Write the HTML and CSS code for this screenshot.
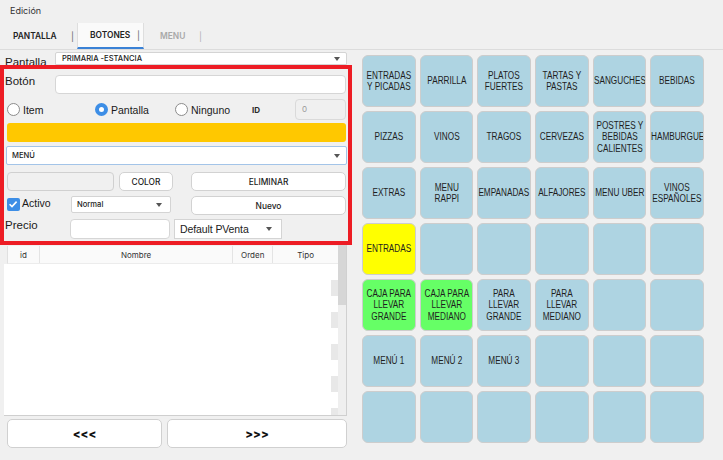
FILE: index.html
```html
<!DOCTYPE html>
<html lang="es">
<head>
<meta charset="utf-8">
<title>Edición</title>
<link rel="stylesheet" href="styles.css">
</head>
<body>
<div class="app">
  <div class="title">Edición</div>
  <div class="tabs">
    <div class="tab t1"><span>PANTALLA</span><span class="pipe">|</span></div>
    <div class="tab t2 active"><span>BOTONES</span><span class="pipe">|</span></div>
    <div class="tab t3 dim"><span>MENU</span><span class="pipe">|</span></div>
  </div>
  <div class="main">
    <div class="left">
      <div class="pant-row">
        <span class="lbl big pant-lbl">Pantalla</span>
        <div class="select top-select"><span>PRIMARIA -ESTANCIA</span><i class="caret"></i></div>
      </div>
      <div class="redbox">
        <div class="r-boton">
          <span class="lbl big">Botón</span>
          <div class="input boton-input"></div>
        </div>
        <div class="r-radio">
          <span class="radio"></span><span class="lbl rlbl">Item</span>
          <span class="radio on"></span><span class="lbl rlbl">Pantalla</span>
          <span class="radio"></span><span class="lbl rlbl">Ninguno</span>
          <span class="id-lbl">ID</span>
          <div class="input id-input">0</div>
        </div>
        <div class="yellow"></div>
        <div class="select menu-select"><span>MENÚ</span><i class="caret"></i></div>
        <div class="r-btns">
          <div class="input empty-box"></div>
          <div class="btn color-btn">COLOR</div>
          <div class="btn wide-btn">ELIMINAR</div>
        </div>
        <div class="r-activo">
          <span class="check"><svg viewBox="0 0 12 12" width="12" height="12"><path d="M2.6 6.2 L5 8.6 L9.6 3.6" fill="none" stroke="#fff" stroke-width="1.6"/></svg></span>
          <span class="lbl activo">Activo</span>
          <div class="select normal-select"><span>Normal</span><i class="caret"></i></div>
          <div class="btn wide-btn nuevo">Nuevo</div>
        </div>
        <div class="r-precio">
          <span class="lbl big precio">Precio</span>
          <div class="input precio-input"></div>
          <div class="select pventa"><span>Default PVenta</span><i class="caret"></i></div>
        </div>
      </div>
      <div class="table">
        <div class="tcontent">
          <div class="thead">
            <div class="th c-id">id</div>
            <div class="th c-nom">Nombre</div>
            <div class="th c-ord">Orden</div>
            <div class="th c-tipo">Tipo</div>
          </div>
          <div class="tbody">
            <div class="tfill"></div>
            <div class="tstripe"></div>
          </div>
        </div>
        <div class="scroll"><div class="thumb"></div></div>
      </div>
      <div class="nav">
        <div class="btn navbtn prev">&lt;&lt;&lt;</div>
        <div class="btn navbtn next">&gt;&gt;&gt;</div>
      </div>
    </div>
    <div class="grid">
      <div class="tile"><div class="tx">ENTRADAS<br>Y PICADAS</div></div>
      <div class="tile"><div class="tx">PARRILLA</div></div>
      <div class="tile"><div class="tx">PLATOS<br>FUERTES</div></div>
      <div class="tile"><div class="tx">TARTAS Y<br>PASTAS</div></div>
      <div class="tile"><div class="tx">SANGUCHES</div></div>
      <div class="tile"><div class="tx">BEBIDAS</div></div>

      <div class="tile"><div class="tx">PIZZAS</div></div>
      <div class="tile"><div class="tx">VINOS</div></div>
      <div class="tile"><div class="tx">TRAGOS</div></div>
      <div class="tile"><div class="tx">CERVEZAS</div></div>
      <div class="tile"><div class="tx">POSTRES Y<br>BEBIDAS<br>CALIENTES</div></div>
      <div class="tile"><div class="tx">HAMBURGUESAS</div></div>

      <div class="tile"><div class="tx">EXTRAS</div></div>
      <div class="tile"><div class="tx">MENU<br>RAPPI</div></div>
      <div class="tile"><div class="tx">EMPANADAS</div></div>
      <div class="tile"><div class="tx">ALFAJORES</div></div>
      <div class="tile"><div class="tx">MENU UBER</div></div>
      <div class="tile"><div class="tx">VINOS<br>ESPAÑOLES</div></div>

      <div class="tile yellow-tile"><div class="tx">ENTRADAS</div></div>
      <div class="tile"></div>
      <div class="tile"></div>
      <div class="tile"></div>
      <div class="tile"></div>
      <div class="tile"></div>

      <div class="tile green"><div class="tx">CAJA PARA<br>LLEVAR<br>GRANDE</div></div>
      <div class="tile green"><div class="tx">CAJA PARA<br>LLEVAR<br>MEDIANO</div></div>
      <div class="tile"><div class="tx">PARA<br>LLEVAR<br>GRANDE</div></div>
      <div class="tile"><div class="tx">PARA<br>LLEVAR<br>MEDIANO</div></div>
      <div class="tile"></div>
      <div class="tile"></div>

      <div class="tile"><div class="tx">MENÚ 1</div></div>
      <div class="tile"><div class="tx">MENÚ 2</div></div>
      <div class="tile"><div class="tx">MENÚ 3</div></div>
      <div class="tile"></div>
      <div class="tile"></div>
      <div class="tile"></div>

      <div class="tile"></div>
      <div class="tile"></div>
      <div class="tile"></div>
      <div class="tile"></div>
      <div class="tile"></div>
      <div class="tile"></div>
    </div>
  </div>
</div>
</body>
</html>
```

FILE: styles.css
```css
* { box-sizing: border-box; }
html, body {
  margin: 0;
  padding: 0;
  background: #f0f0f0;
}
body {
  width: 723px;
  height: 460px;
  overflow: hidden;
  font-family: "Inter", "Liberation Sans", sans-serif;
  color: #222;
}
.app { width: 723px; }

.title {
  height: 23px;
  line-height: 21px;
  padding-left: 10px;
  font-size: 9px;
  color: #333;
}

.tabs {
  display: flex;
  height: 27px;
  border-bottom: 1px solid #dcdcdc;
}
.tab {
  display: flex;
  align-items: center;
  height: 26px;
  font-size: 8.4px;
  font-weight: 600;
  color: #222;
  padding-left: 13px;
  padding-right: 3px;
}
.tab .pipe {
  margin-left: auto;
  font-weight: 400;
  color: #666;
  font-size: 9px;
}
.t1 { width: 77px; }
.t2 { width: 67px; }
.t3 { width: 61px; padding-left: 16px; }
.tab.active {
  background: #fafafa;
  border-left: 1px solid #dedede;
  border-right: 1px solid #dedede;
  border-bottom: 2px solid #3b82d6;
  padding-left: 12px;
}
.tab.dim { color: #a8a8a8; }
.tab.dim .pipe { color: #b0b0b0; }

.main {
  display: flex;
  align-items: flex-start;
}
.left {
  width: 352px;
  flex: none;
}

.lbl {
  font-family: "Liberation Sans", Arial, sans-serif;
  color: #1a1a1a;
}
.big { font-size: 11.5px; }

.pant-row {
  display: flex;
  height: 15px;
  padding-top: 2px;
}
.pant-lbl {
  width: 55px;
  padding-left: 5px;
  line-height: 13px;
  margin-top: 4px;
}
.select {
  display: flex;
  align-items: center;
  background: #fff;
  border: 1px solid #d4d4d4;
  border-radius: 2px;
  font-size: 7.6px;
  font-weight: 500;
  color: #222;
  padding-left: 6px;
  padding-right: 6px;
}
.select .caret {
  margin-left: auto;
  width: 0;
  height: 0;
  border-left: 3.5px solid transparent;
  border-right: 3.5px solid transparent;
  border-top: 4px solid #555;
}
.top-select {
  width: 292px;
  height: 13px;
  border-radius: 2px 2px 0 0;
}

.redbox {
  position: relative;
  z-index: 1;
  width: 352px;
  height: 180px;
  border: 4px solid #ed1c24;
  padding: 6px 2px 0 2px;
}

.input {
  background: #fff;
  border: 1px solid #d6d6d6;
  border-radius: 4px;
}

.r-boton {
  display: flex;
  align-items: center;
  height: 19px;
}
.r-boton .lbl {
  width: 49px;
  margin-left: -1px;
  margin-top: -7px;
}
.boton-input {
  width: 292px;
  height: 19px;
  margin-left: 1px;
}

.r-radio {
  display: flex;
  align-items: center;
  height: 21px;
  margin-top: 5px;
}
.radio {
  width: 13px;
  height: 13px;
  border-radius: 50%;
  border: 1px solid #8c8c8c;
  background: #fff;
  flex: none;
}
.radio:first-child { margin-left: 1px; }
.radio.on {
  border: 4px solid #3d8ee6;
  background: #fff;
}
.rlbl {
  font-size: 10.5px;
  margin-left: 3px;
}
.r-radio .rlbl:nth-of-type(2) { width: 72px; }
.r-radio .rlbl:nth-of-type(4) { width: 64px; }
.r-radio .rlbl:nth-of-type(6) { width: 61px; }
.id-lbl {
  font-size: 8px;
  font-weight: 700;
  color: #2a2a2a;
  width: 43px;
}
.id-input {
  width: 51px;
  height: 21px;
  background: #f0f0f0;
  border-color: #dadada;
  font-size: 8px;
  color: #9a9a9a;
  line-height: 19px;
  padding-left: 6px;
}

.yellow {
  height: 19px;
  margin: 3px 0 0 1px;
  background: #ffc800;
  border-radius: 3px;
}

.menu-select {
  height: 19px;
  margin: 4px -1px 0 0;
  border: 1.5px solid #a3c4e8;
  border-radius: 2px;
  padding-left: 5px;
}

.r-btns {
  display: flex;
  height: 19px;
  margin-top: 7px;
  padding-left: 1px;
}
.empty-box {
  width: 107px;
  height: 19px;
  background: #f0f0f0;
  border-color: #d0d0d0;
}
.btn {
  display: flex;
  align-items: center;
  justify-content: center;
  background: #fff;
  border: 1px solid #d2d2d2;
  border-radius: 5px;
  font-size: 8.4px;
  font-weight: 500;
  color: #1a1a1a;
}
.color-btn {
  width: 54px;
  height: 19px;
  margin-left: 5px;
}
.wide-btn {
  width: 155px;
  height: 19px;
  margin-left: auto;
}

.r-activo {
  display: flex;
  align-items: flex-start;
  height: 19px;
  margin-top: 5px;
}
.check {
  width: 13px;
  height: 13px;
  margin: 2px 0 0 1px;
  background: #3d8ee6;
  border-radius: 2px;
  flex: none;
  display: flex;
}
.activo {
  flex: none;
  font-size: 10.5px;
  margin-top: 1px;
  margin-left: 2px;
  width: 49px;
}
.normal-select {
  flex: none;
  width: 100px;
  height: 17px;
  padding-left: 5px;
  font-size: 7.6px;
  align-items: flex-start;
  padding-top: 3px;
}
.normal-select .caret { margin-top: 3px; margin-right: 2px; }
.nuevo { margin-left: auto; flex: none; }

.r-precio {
  display: flex;
  align-items: center;
  height: 20px;
  margin-top: 4px;
}
.precio {
  width: 65px;
  margin-left: -1px;
  margin-top: -8px;
}
.precio-input {
  width: 100px;
  height: 20px;
}
.pventa {
  width: 108px;
  height: 20px;
  margin-left: 4px;
  font-family: "Liberation Sans", Arial, sans-serif;
  font-size: 10.5px;
  font-weight: 400;
  letter-spacing: -0.1px;
  padding-left: 5px;
  padding-right: 9px;
  border-radius: 0;
}

.table {
  display: flex;
  width: 343px;
  height: 171px;
  margin-left: 4px;
  border-bottom: 1px solid #cfcfcf;
}
.tcontent {
  width: 334px;
  display: flex;
  flex-direction: column;
}
.thead {
  display: flex;
  height: 18px;
  margin: 1px 0 0 3px;
  background: #fafafa;
  border-left: 1px solid #e0e0e0;
  border-bottom: 1px solid #ececec;
}
.th {
  display: flex;
  align-items: center;
  justify-content: center;
  font-size: 8px;
  color: #333;
  border-right: 1px solid #e4e4e4;
}
.c-id { width: 32px; }
.c-nom { width: 194px; }
.c-ord { width: 40px; }
.c-tipo { width: 65px; border-right: none; }
.tbody {
  flex: 1;
  display: flex;
}
.tfill {
  flex: 1;
  background: #fff;
}
.tstripe {
  width: 7px;
  background: repeating-linear-gradient(to bottom, #fff 0 16px, #e8e8e8 16px 32px);
}
.scroll {
  width: 9px;
  background: #efefef;
  border-right: 1px solid #d0d0d0;
}
.thumb {
  height: 60px;
  background: #d6d6d6;
}

.nav {
  display: flex;
  margin-top: 3px;
  padding-left: 7px;
}
.navbtn {
  height: 29px;
  font-size: 11.5px;
  font-weight: 800;
  color: #111;
  border-color: #d0d0d0;
}
.prev { width: 155px; }
.next { width: 180px; margin-left: 5px; }

.grid {
  margin: 5px 0 0 10px;
  width: 342px;
  display: grid;
  grid-template-columns: repeat(6, 1fr);
  grid-auto-rows: 52px;
  gap: 4px 4px;
}
.tile {
  background: #aed4e2;
  border: 1px solid #cdcdcd;
  border-radius: 6px;
  overflow: hidden;
  display: flex;
  flex-direction: column;
  justify-content: center;
}
.tile .tx {
  width: 122%;
  transform: scaleX(0.82);
  transform-origin: left center;
  text-align: center;
  white-space: nowrap;
  font-family: "Liberation Sans", Arial, sans-serif;
  font-size: 10px;
  line-height: 11.5px;
  color: #1e1e1e;
}
.tile.yellow-tile { background: #ffff00; }
.tile.green { background: #66ff66; }
```
